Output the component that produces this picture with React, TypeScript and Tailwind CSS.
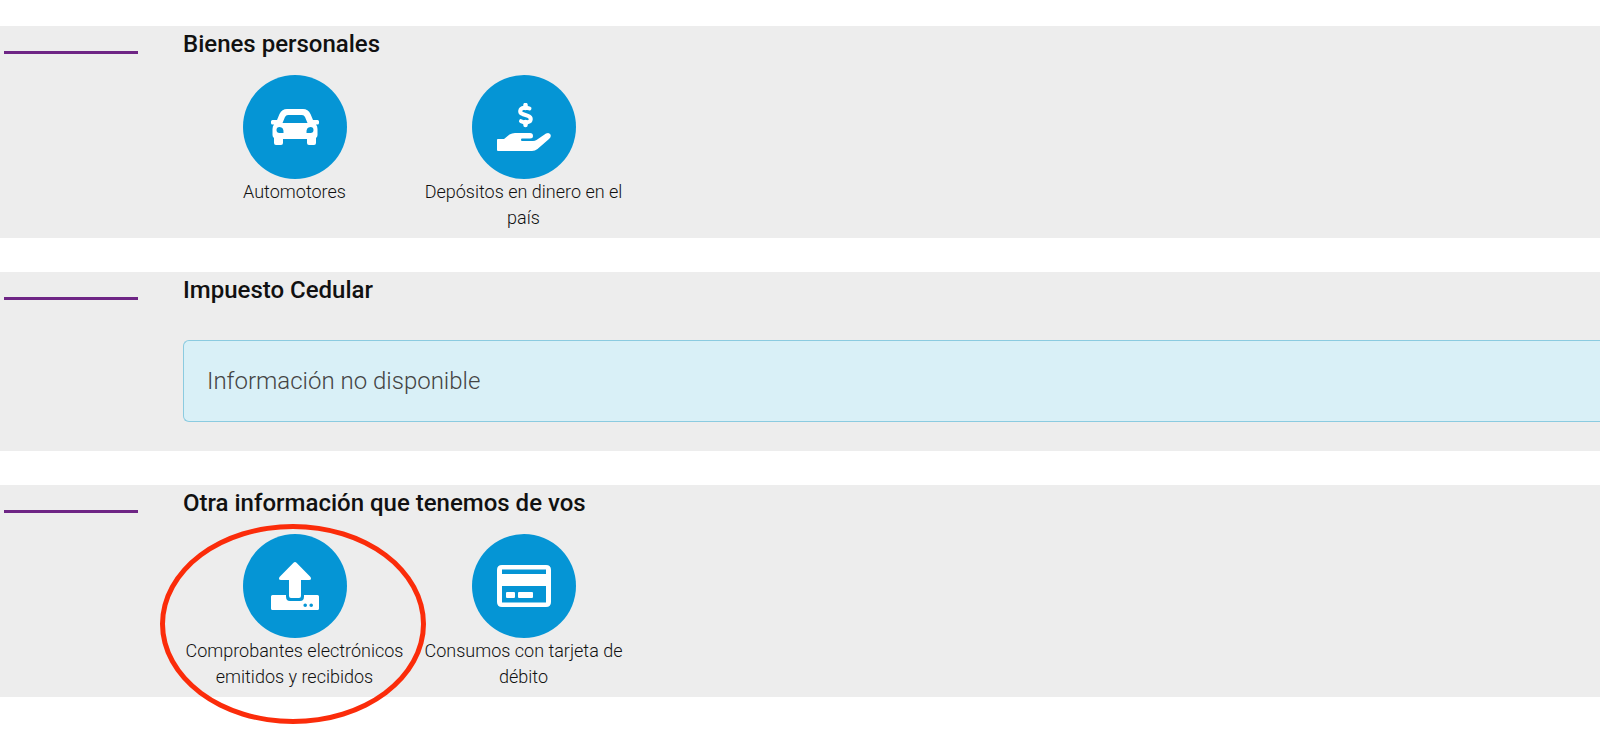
import React from 'react';

const CarIcon = () => (
    <svg width="48" height="36" viewBox="0 0 48 36" fill="currentColor" aria-hidden="true">
        <path
            fillRule="evenodd"
            d="M16 0H32Q37 0 39.500 5L42 11H46.500Q48 11 48 12.500V14Q48 15.500 46.500 15.500H45Q46.500 17 46.500 20V26Q46.500 28 45 29V34Q45 36 43 36H38Q36 36 36 34V30H12V34Q12 36 10 36H5Q3 36 3 34V29Q1.500 28 1.500 26V20Q1.500 17 3 15.500H1.500Q0 15.500 0 14V12.500Q0 11 1.500 11H6L8.500 5Q11 0 16 0ZM17 6Q15 6 14 8L11.500 14H36.500L34 8Q33 6 31 6ZM8.500 18Q5.500 18 5.500 21Q5.500 24 8.500 24H12.500Q13 18 8.500 18ZM39.500 18Q35 18 35.500 24H39.500Q42.500 24 42.500 21Q42.500 18 39.500 18Z"
        />
    </svg>
);

const MoneyHandIcon = () => (
    <svg width="54" height="48" viewBox="0 0 54 48" fill="currentColor" aria-hidden="true">
        <path
            d="M32.500 5.500C30.500 4.600 28.500 4.500 27 4.800C22.500 5.500 22 9.700 25.500 11L31 12.800C35 14.300 34.500 18.600 30.500 19.200C28.500 19.600 26 19.200 24 18.200"
            fill="none"
            stroke="currentColor"
            strokeWidth="4"
            strokeLinecap="round"
            strokeLinejoin="round"
        />
        <path d="M28.500 2V5M28.500 19V22" fill="none" stroke="currentColor" strokeWidth="4.500" strokeLinecap="round" />
        <path d="M0 36.500Q0 36 1 36H7L12.500 31.500Q15 30 18 30H33Q36 30 36 33Q36 35.500 33 35.500H25Q24 35.500 24 36.700Q24 38 25 38H36Q38 38 39.500 37L49 30.500Q52 29 53.500 31.500Q54.500 34 52 36L40.500 46Q38 48 35 48H1Q0 48 0 47Z" />
    </svg>
);

const UploadIcon = () => (
    <svg width="48" height="48" viewBox="0 0 48 48" fill="currentColor" aria-hidden="true">
        <path d="M22.500 0.700Q24 -0.700 25.500 0.700L39.500 15Q41 18 38 18H30V34Q30 36 28 36H20Q18 36 18 34V18H10Q7 18 8.500 15Z" />
        <path
            fillRule="evenodd"
            d="M1.500 33H15V34.500Q15 39 19 39H29Q33 39 33 34.500V33H46.500Q48 33 48 34.500V46.500Q48 48 46.500 48H1.500Q0 48 0 46.500V34.500Q0 33 1.500 33ZM34.200 41.500A1.800 1.800 0 1 0 34.200 45.100A1.800 1.800 0 1 0 34.200 41.500ZM40.200 41.500A1.800 1.800 0 1 0 40.200 45.100A1.800 1.800 0 1 0 40.200 41.500Z"
        />
    </svg>
);

const CardIcon = () => (
    <svg width="54" height="42" viewBox="0 0 54 42" fill="currentColor" aria-hidden="true">
        <path fillRule="evenodd" d="M5 0H49Q54 0 54 5V37Q54 42 49 42H5Q0 42 0 37V5Q0 0 5 0ZM5 4.500V9H49V4.500ZM5 21V37.500H49V21Z" />
        <path d="M10 27H17Q18 27 18 28V32Q18 33 17 33H10Q9 33 9 32V28Q9 27 10 27ZM22 27H35Q36 27 36 28V32Q36 33 35 33H22Q21 33 21 32V28Q21 27 22 27Z" />
    </svg>
);

const sections = [
    {
        title: 'Bienes personales',
        items: [
            { label: 'Automotores', icon: <CarIcon /> },
            { label: 'Depósitos en dinero en el país', icon: <MoneyHandIcon /> },
        ],
    },
    { title: 'Impuesto Cedular', items: [] },
    {
        title: 'Otra información que tenemos de vos',
        items: [
            { label: 'Comprobantes electrónicos emitidos y recibidos', icon: <UploadIcon />, highlighted: true },
            { label: 'Consumos con tarjeta de débito', icon: <CardIcon /> },
        ],
    },
];

interface TileProps {
    label: string;
    icon: React.ReactNode;
    highlighted?: boolean;
}

const Tile: React.FC<TileProps> = ({ label, icon, highlighted }) => (
    <a href="#" className="relative flex w-[229px] flex-col items-center px-1 text-center text-[18px] leading-[26px] font-light text-[#111111]">
        <span className="flex size-[104px] items-center justify-center rounded-full bg-[#0595d5] text-white">{icon}</span>
        <span>{label}</span>
        {highlighted && (
            <span className="pointer-events-none absolute -top-[10px] -left-5 h-[200px] w-[266px] rounded-[50%] border-[5px] border-[#fb2c0a]" />
        )}
    </a>
);

const App: React.FC = () => {
    return (
        <main className="flex flex-col gap-[34px] overflow-hidden bg-white pt-[26px] pb-[45px] font-['Roboto',sans-serif]">
            {sections.map((section) => (
                <section key={section.title} className="flex bg-[#ededed] pl-1">
                    <div className="mt-[25px] h-[3px] w-[134px] shrink-0 bg-[#6e2585]" />
                    <div className="ml-[45px] min-w-0 flex-1">
                        <h2 className="text-[24px] leading-9 font-medium text-[#111111]">{section.title}</h2>
                        {section.items.length > 0 ? (
                            <div className="mt-[13px] -ml-[3px] flex pb-[7px]">
                                {section.items.map((item) => (
                                    <Tile key={item.label} {...item} />
                                ))}
                            </div>
                        ) : (
                            <p className="mt-8 mb-[29px] rounded-l-md border border-r-0 border-[#8bcbe0] bg-[#d9f0f7] px-[23px] py-[22px] text-[24px] leading-9 font-light text-[#444444]">
                                Información no disponible
                            </p>
                        )}
                    </div>
                </section>
            ))}
        </main>
    );
};

export default App;
